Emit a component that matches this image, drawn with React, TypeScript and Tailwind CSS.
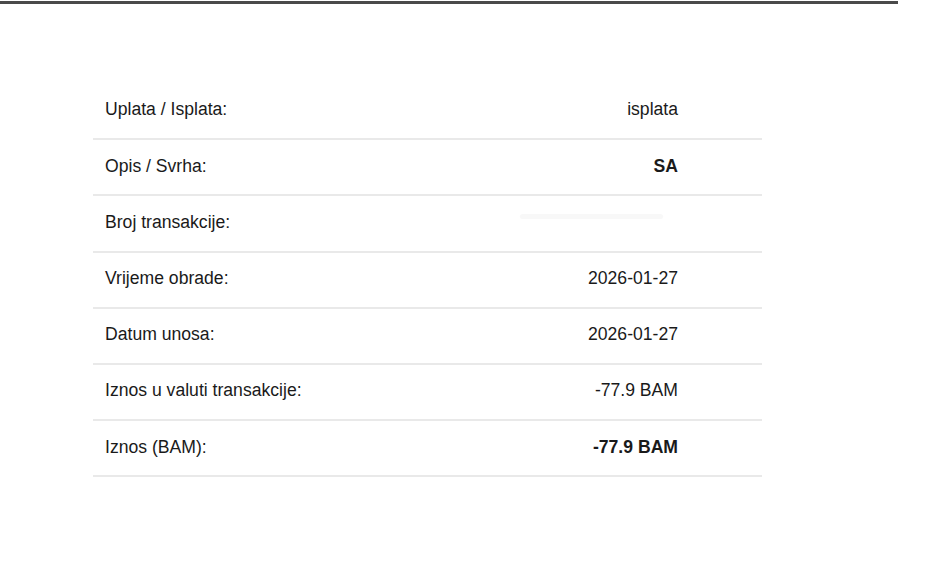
const rows: { label: string; value: string; bold?: boolean }[] = [
  { label: 'Uplata / Isplata:', value: 'isplata' },
  { label: 'Opis / Svrha:', value: 'SA', bold: true },
  { label: 'Broj transakcije:', value: '' },
  { label: 'Vrijeme obrade:', value: '2026-01-27' },
  { label: 'Datum unosa:', value: '2026-01-27' },
  { label: 'Iznos u valuti transakcije:', value: '-77.9 BAM' },
  { label: 'Iznos (BAM):', value: '-77.9 BAM', bold: true },
];

export default function App() {
  return (
    <div
      className="w-[929px] h-[570px] bg-white text-[#1a1a1a] overflow-hidden"
      style={{ fontFamily: '"Liberation Sans", Arial, sans-serif' }}
    >
      <div className="pt-px">
        <div className="w-[898px] h-[3px] bg-[#4a4a4a]" />
      </div>

      <div className="ml-[93px] mt-[80px] w-[669px]">
        {rows.map((r) => (
          <div
            key={r.label}
            className="h-[56.2px] flex items-center justify-between border-b-2 border-[#e9e9e9] pl-3 pr-[84px] pb-[3px] text-[17.6px]"
          >
            <span>{r.label}</span>
            <span className={r.bold ? 'font-bold' : undefined}>
              {r.value || (
                <span className="inline-block w-[143px] h-[5px] mr-[15px] bg-[#f8f8f8] rounded-sm -translate-y-[9px]" />
              )}
            </span>
          </div>
        ))}
      </div>
    </div>
  );
}
